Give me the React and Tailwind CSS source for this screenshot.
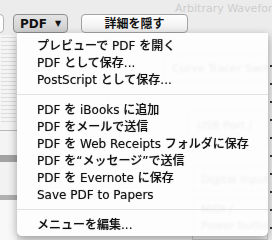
import React from 'react';

const items = [
    'プレビューで PDF を開く',
    'PDF として保存...',
    'PostScript として保存...',
    '-',
    'PDF を iBooks に追加',
    'PDF をメールで送信',
    'PDF を Web Receipts フォルダに保存',
    'PDF を“メッセージ”で送信',
    'PDF を Evernote に保存',
    'Save PDF to Papers',
    '-',
    'メニューを編集...',
];

const font = { fontFamily: '"DejaVu Sans", "Noto Sans CJK JP", sans-serif' };

export default function App() {
    return (
        <div
            className="relative w-[272px] h-[240px] overflow-hidden bg-[#ececec] flex flex-col text-[#111]"
            style={font}
        >
            {/* toolbar */}
            <div className="flex h-[35px] shrink-0">
                <div className="flex items-start pt-[14px] gap-[13px]">
                    <div className="flex gap-[9px]">
                        <div className="-ml-[10px] w-[14px] h-[19px] rounded-[4px] border border-[#b5b5b5] bg-white" />
                        <div className="w-[55px] h-[19px] rounded-[4px] border border-[#8f8f8f] bg-gradient-to-b from-[#e4e4e4] to-[#cfcfcf] flex items-center justify-center gap-[8px] text-[12px] font-semibold">
                            <span>PDF</span>
                            <span className="text-[8px]">▼</span>
                        </div>
                    </div>
                    <div className="w-[107px] h-[19px] rounded-[4px] border border-[#a3a3a3] bg-gradient-to-b from-white to-[#ededed] flex items-center justify-center text-[12px] font-semibold">
                        詳細を隠す
                    </div>
                </div>
                <div className="flex-1 min-w-0 -ml-[13px] pt-[1px] overflow-hidden">
                    <div className="text-[11px] text-[#cdcdcd] whitespace-nowrap">Arbitrary Waveform</div>
                </div>
            </div>

            {/* window content behind the menu */}
            <div className="flex flex-1">
                <div className="w-[17px] flex flex-col bg-[#f4f4f4]">
                    <div className="h-[95px] flex flex-col gap-[3px] pt-[2px] px-[1px]">
                        {Array.from({ length: 22 }).map((_, i) => (
                            <div key={i} className="h-[1px] bg-[#dcdcdc]" />
                        ))}
                    </div>
                    <div className="h-[1px] bg-[#b8b8b8]" />
                    <div className="h-[24px]" />
                    <div className="h-[7px] bg-[#a3a3a3]" />
                    <div className="h-[33px] bg-[#f2f2f2]" />
                    <div className="h-[5px] bg-[#b0b0b0]" />
                    <div className="flex-1 bg-[#f8f8f8]" />
                </div>
                <div className="flex-1 flex flex-col items-end pr-[2px] text-[#7a7a7a] text-[11px]">
                    <div className="mt-[20px] w-[105px] h-[26px] border border-[#c8c8c8] px-[8px] pt-[5px] whitespace-nowrap overflow-hidden">
                        Curve Tracer Switch
                    </div>
                    <div className="mt-[30px] w-[80px] h-[36px] border border-[#c8c8c8] px-[8px] pt-[6px] whitespace-nowrap overflow-hidden">
                        USB Port /
                    </div>
                    <div className="mt-[20px] w-[76px] h-[24px] border border-[#c8c8c8] px-[8px] pt-[4px] whitespace-nowrap overflow-hidden">
                        Digital Input
                    </div>
                    <div className="mt-[8px] w-[76px] flex-1 border border-[#c8c8c8] px-[8px] pt-[2px] leading-[16px] whitespace-nowrap overflow-hidden">
                        MIDI /<br />Power button
                    </div>
                </div>
                <div className="w-[2px] flex flex-col gap-[16px] pt-[30px]">
                    {Array.from({ length: 10 }).map((_, i) => (
                        <div key={i} className="h-[2px] bg-[#333]" />
                    ))}
                </div>
            </div>

            {/* pop-up menu */}
            <div className="absolute left-[17px] top-[33px] w-[251px] h-[203px] bg-white/[0.88] backdrop-blur-[1px] rounded-b-[5px] shadow-[0_3px_10px_rgba(0,0,0,0.35)] pt-[4px]">
                {items.map((t, i) =>
                    t === '-' ? (
                        <div key={i} className="h-[13px] flex items-center">
                            <div className="w-full h-[1px] bg-[#e2e2e2]" />
                        </div>
                    ) : (
                        <div
                            key={i}
                            className="h-[17px] flex items-center pl-[20px] text-[12px] font-medium whitespace-nowrap [text-shadow:0_0_1px_rgba(0,0,0,0.45)]"
                        >
                            {t}
                        </div>
                    )
                )}
            </div>
        </div>
    );
}
